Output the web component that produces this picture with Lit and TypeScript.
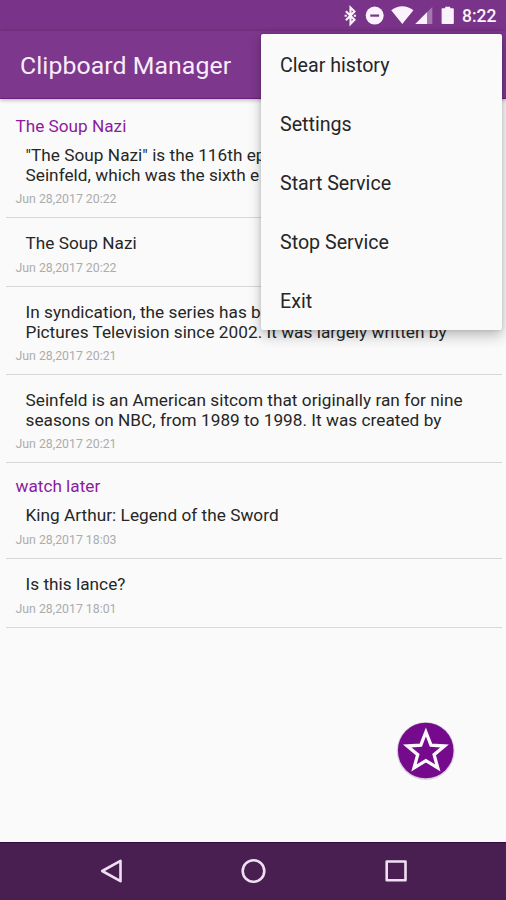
import { LitElement, html, css, nothing } from "lit";
import { customElement } from "lit/decorators.js";

interface Clip {
  title?: string;
  lines: string[];
  date: string;
}

const clips: Clip[] = [
  {
    title: "The Soup Nazi",
    lines: ['"The Soup Nazi" is the 116th ep', "Seinfeld, which was the sixth e"],
    date: "Jun 28,2017 20:22",
  },
  { lines: ["The Soup Nazi"], date: "Jun 28,2017 20:22" },
  {
    lines: ["In syndication, the series has b", "Pictures Television since 2002. It was largely written by"],
    date: "Jun 28,2017 20:21",
  },
  {
    lines: ["Seinfeld is an American sitcom that originally ran for nine", "seasons on NBC, from 1989 to 1998. It was created by"],
    date: "Jun 28,2017 20:21",
  },
  { title: "watch later", lines: ["King Arthur: Legend of the Sword"], date: "Jun 28,2017 18:03" },
  { lines: ["Is this lance?"], date: "Jun 28,2017 18:01" },
];

const menuItems = ["Clear history", "Settings", "Start Service", "Stop Service", "Exit"];

@customElement("app-root")
export class AppRoot extends LitElement {
  static styles = css`
    :host {
      display: flex;
      flex-direction: column;
      position: relative;
      width: 506px;
      height: 900px;
      overflow: hidden;
      background: #fafafa;
      font-family: Roboto, "Liberation Sans", sans-serif;
      color: #262626;
    }
    .status {
      flex: none;
      height: 31px;
      display: flex;
      justify-content: flex-end;
      background: #793388;
    }
    .status svg {
      display: block;
    }
    .clock {
      width: 44px;
      line-height: 32px;
      font-size: 17.5px;
      font-weight: 500;
      color: #fbf3fc;
      white-space: nowrap;
    }
    .bar {
      flex: none;
      height: 68px;
      box-sizing: border-box;
      padding-left: 20px;
      background: #7d378d;
      border-bottom: 1px solid #6a1f7c;
      box-shadow: 0 1px 4px rgba(0, 0, 0, 0.3);
      line-height: 69px;
      font-size: 24.8px;
      letter-spacing: 0.08px;
      color: #f8eefb;
      z-index: 1;
    }
    .list {
      flex: 1;
      padding: 4px 4px 0 6px;
    }
    .row {
      box-sizing: border-box;
      height: 69px;
      padding: 15px 0 0 9.5px;
      border-bottom: 1px solid #d8d8d8;
      white-space: nowrap;
    }
    .row.double {
      height: 88px;
    }
    .row.titled {
      height: 96px;
      padding-top: 13px;
    }
    .row.titled.double {
      height: 115px;
    }
    .title {
      height: 29px;
      line-height: 20px;
      font-size: 17.2px;
      color: #8a1c9e;
    }
    .line {
      height: 20px;
      line-height: 20px;
      padding-left: 10px;
      font-size: 17.2px;
      letter-spacing: 0.035px;
    }
    .date {
      margin-top: 7px;
      line-height: 16px;
      font-size: 12.3px;
      color: #acacac;
    }
    .double .date {
      margin-top: 6px;
    }
    .menu {
      position: absolute;
      left: 261px;
      top: 34px;
      width: 241px;
      height: 296px;
      box-sizing: border-box;
      padding-top: 2px;
      border-radius: 2px;
      background: #fafafa;
      box-shadow: 0 6px 13px rgba(0, 0, 0, 0.24), 0 0 4px rgba(0, 0, 0, 0.14);
      z-index: 2;
    }
    .item {
      height: 59px;
      padding-left: 19px;
      line-height: 60px;
      font-size: 19.65px;
    }
    .fab {
      position: absolute;
      left: 395px;
      top: 720px;
    }
    .nav {
      flex: none;
      height: 58px;
      display: flex;
      justify-content: center;
      background: #481f50;
      box-shadow: inset 0 1px #32083d;
    }
  `;

  render() {
    return html`
      <div class="status">
        <svg width="122" height="31" viewBox="340 0 122 31" fill="#fbf3fc">
          <path d="M345.9 11.2l8.6 8.6-4 4.1V7.5l4 4.1-8.6 8.6" fill="none" stroke="#fbf3fc" stroke-width="2.1" />
          <path d="M344.6 15.7h2.2M353.8 15.7h2.2" stroke="#fbf3fc" stroke-width="2" />
          <circle cx="374.7" cy="15.6" r="9" />
          <path d="M370.3 15.6h8.8" stroke="#793388" stroke-width="2.2" />
          <path d="M391.2 10.2Q402.3 2.4 413.4 10.2L402.3 24z" />
          <path d="M432.3 7v17H415.3z" opacity=".35" />
          <path d="M427 12.3V24h-11.7z" />
          <path d="M442.4 8.3h2.8V6.7h5v1.6h2.8a.8.8 0 0 1 .8.8v14.1a.8.8 0 0 1-.8.8h-10.6a.8.8 0 0 1-.8-.8V9.1a.8.8 0 0 1 .8-.8z" />
        </svg>
        <div class="clock">8:22</div>
      </div>
      <div class="bar">Clipboard Manager</div>
      <div class="list">
        ${clips.map(
          (c) => html`<div class="row ${c.title ? "titled" : ""} ${c.lines.length > 1 ? "double" : ""}">
            ${c.title ? html`<div class="title">${c.title}</div>` : nothing}
            ${c.lines.map((l) => html`<div class="line">${l}</div>`)}
            <div class="date">${c.date}</div>
          </div>`
        )}
      </div>
      <div class="menu">${menuItems.map((m) => html`<div class="item">${m}</div>`)}</div>
      <svg class="fab" width="62" height="62" viewBox="395 720 62 62">
        <circle cx="425.7" cy="751" r="29" fill="#d8d2da" />
        <circle cx="425.7" cy="750.5" r="27.8" fill="#750a8c" />
        <path
          d="M425.9 732L431 745.2L444.6 746L434.1 754.7L437.8 768L425.9 760.7L414 768L417.7 754.7L407.2 746L420.8 745.2Z"
          fill="none" stroke="#fdf8fe" stroke-width="3.3"
        />
      </svg>
      <div class="nav">
        <svg width="506" height="58" viewBox="0 842 506 58" fill="none" stroke="#efdff3" stroke-width="2.6" stroke-linejoin="round">
          <path d="M120.5 860.8v20.4L102.2 871z" />
          <circle cx="253.5" cy="871" r="10.8" />
          <rect x="386.7" y="861.5" width="18.8" height="18.8" />
        </svg>
      </div>
    `;
  }
}
